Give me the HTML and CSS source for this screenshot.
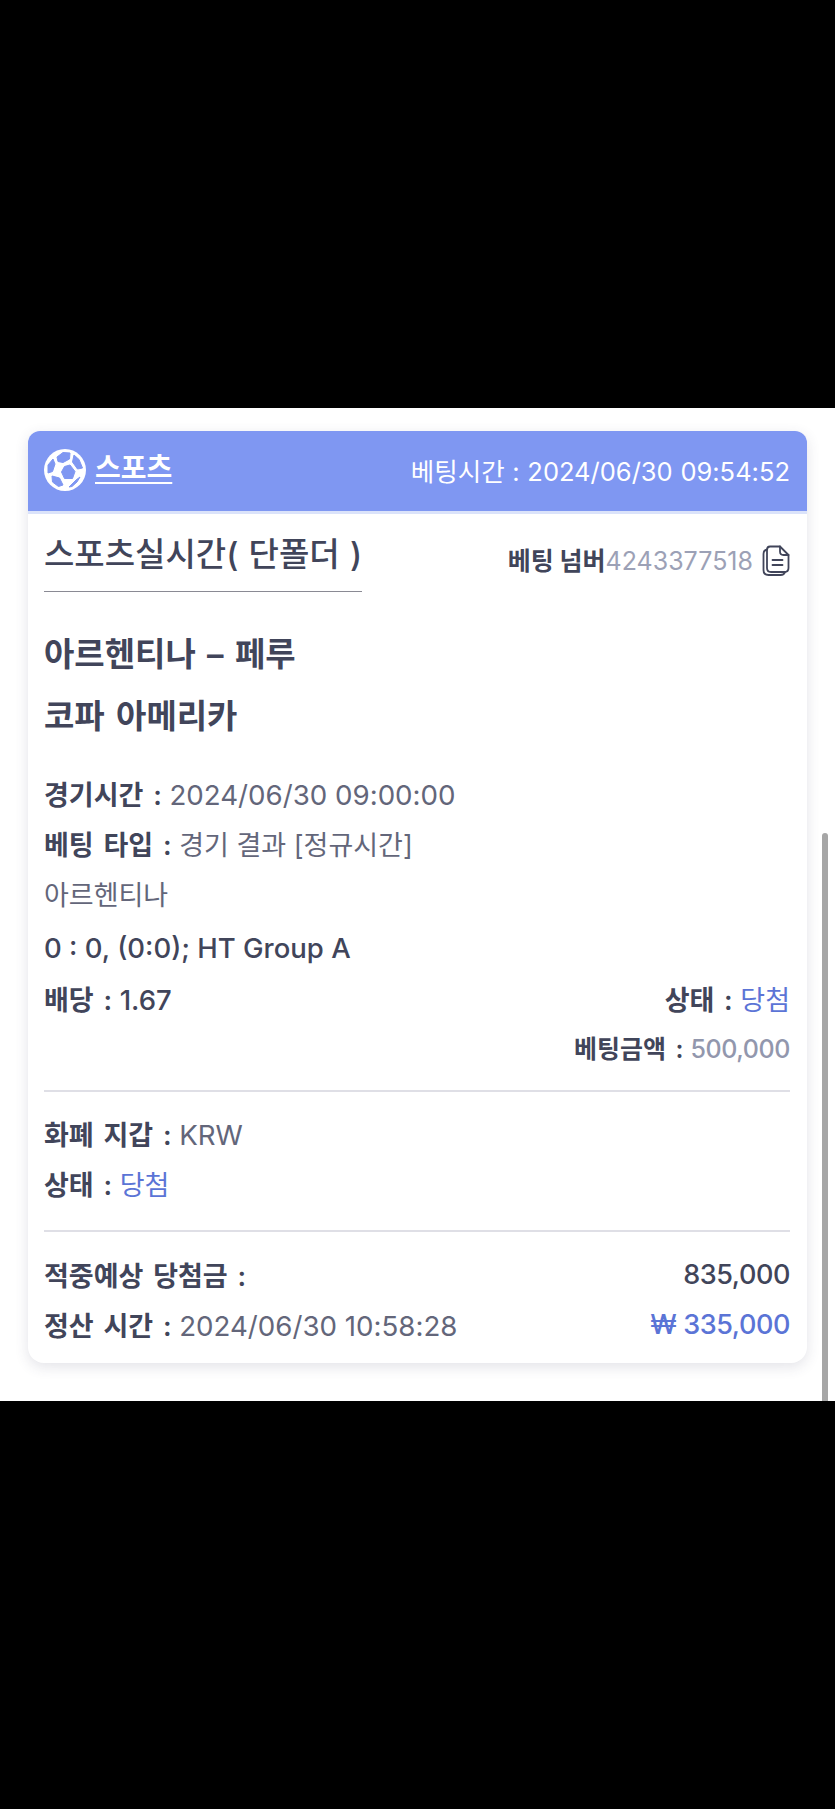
FILE: index.html
```html
<!DOCTYPE html>
<html lang="ko">
<head>
    <meta charset="UTF-8">
    <meta name="viewport" content="width=device-width, initial-scale=1.0">
    <title>베팅 내역</title>
    <link rel="stylesheet" href="styles.css">
</head>
<body>
    <div class="black-band"></div>
    <main class="screen">
        <div class="card">
            <div class="card-head">
                <div class="sport">
                    <svg class="ball" viewBox="0 0 42 42">
                        <circle cx="21" cy="21" r="21" fill="#fff"/>
                        <g fill="#7f97f2" stroke="#7f97f2" stroke-width="1" stroke-linejoin="round">
                            <path d="M13 8l6-4.500 7 .5-.5 6-6.500 3.500-5-1z"/>
                            <path d="M30 6l5 4.500 3.500 8.500-5 1-5-7z"/>
                            <path d="M26 16l5 6.500-2.500 7-8 0-3-6.500 3-5.500z"/>
                            <path d="M4 16l5-6 2 5-2.500 7.500-4.500 1.500z"/>
                            <path d="M8 27l7.500 2 3.500 7-4.500 1.500-6-4.500z"/>
                            <path d="M32 31l4-3-3 5-5 4.500-3 .5z"/>
                        </g>
                    </svg>
                    <span class="sport-name">스포츠</span>
                </div>
                <div class="bet-time">베팅시간 : 2024/06/30 09:54:52</div>
            </div>
            <div class="card-body">
                <div class="title-row">
                    <h2 class="bet-title">스포츠실시간( 단폴더 )</h2>
                    <div class="bet-number">
                        <strong>베팅 넘버</strong><span class="muted">4243377518</span>
                        <svg class="copy" viewBox="0 0 28 32" fill="none" stroke="#41455a" stroke-width="1.800" stroke-linejoin="round" stroke-linecap="round">
                            <path d="M5 4.500C2.500 5 1.500 6.500 1.500 9v16c0 3 2 5 5 5h12c2.500 0 4-1 4.500-3"/>
                            <path d="M8 1.500h10l8.500 8.500v13c0 2.500-1.500 4-4 4H9c-2.500 0-4-1.500-4-4V5c0-2.200 1-3.500 3-3.500z"/>
                            <path d="M18 1.500v5c0 2 1.500 3.500 3.500 3.500h5"/>
                            <path d="M10.500 15h10M10.500 20h10"/>
                        </svg>
                    </div>
                </div>
                <div class="match">
                    <p>아르헨티나 – 페루</p>
                    <p>코파 아메리카</p>
                </div>
                <div class="rows">
                    <div class="row"><div><b>경기시간 :</b> <span class="val num">2024/06/30 09:00:00</span></div></div>
                    <div class="row"><div><b>베팅 타입 :</b> <span class="val">경기 결과 [정규시간]</span></div></div>
                    <div class="row"><div class="val">아르헨티나</div></div>
                    <div class="row score"><div class="latin">0 : 0, (0:0); HT Group A</div></div>
                    <div class="row"><div><b>배당 :</b> <span class="latin">1.67</span></div><div><b>상태 :</b> <span class="blue">당첨</span></div></div>
                    <div class="row end small"><div><b>베팅금액 :</b> <span class="muted amount">500,000</span></div></div>
                </div>
                <div class="rows section">
                    <div class="row"><div><b>화폐 지갑 :</b> <span class="val num">KRW</span></div></div>
                    <div class="row"><div><b>상태 :</b> <span class="blue">당첨</span></div></div>
                </div>
                <div class="rows section last">
                    <div class="row"><div><b>적중예상 당첨금 :</b></div><div class="latin money">835,000</div></div>
                    <div class="row"><div><b>정산 시간 :</b> <span class="val num">2024/06/30 10:58:28</span></div><div class="latin money blue">₩ 335,000</div></div>
                </div>
            </div>
        </div>
        <div class="scrollbar"></div>
    </main>
    <div class="black-band"></div>
</body>
</html>
```

FILE: styles.css
```css
* {
    box-sizing: border-box;
}
body {
    margin: 0;
    background-color: #000;
    font-family: Inter, "Noto Sans CJK KR", sans-serif;
    color: #41455a;
}
.black-band {
    height: 408px;
    background-color: #000;
}
.screen {
    position: relative;
    height: 993px;
    padding: 23px 28px 0;
    background-color: #fff;
}
.scrollbar {
    position: absolute;
    top: 425px;
    right: 7px;
    bottom: 0;
    width: 6px;
    border-radius: 3px 3px 0 0;
    background-color: #a6a6a6;
}
.card {
    height: 932px;
    border-radius: 12px 12px 16px 16px;
    background-color: #fff;
    box-shadow: 0 4px 14px rgba(60, 60, 90, 0.14);
}
.card-head {
    display: flex;
    justify-content: space-between;
    align-items: center;
    height: 83px;
    padding: 0 17px 3px 16px;
    background-color: #7f97f2;
    border-bottom: 3px solid #dbe3fa;
    border-radius: 12px 12px 0 0;
    color: #fff;
}
.sport {
    display: flex;
    align-items: center;
    gap: 9px;
}
.ball {
    width: 42px;
    height: 42px;
}
.sport-name {
    margin-top: -4px;
    font-size: 28px;
    font-weight: 700;
    line-height: 32px;
    text-decoration: underline;
    text-underline-offset: 4px;
}
.bet-time {
    font-size: 25.5px;
    word-spacing: 0.5px;
}
.card-body {
    padding: 0 17px 0 16px;
}
.title-row {
    display: flex;
    justify-content: space-between;
    align-items: flex-start;
}
.bet-title {
    margin: 18px 0 0;
    padding-bottom: 14px;
    border-bottom: 1px solid #8a8a94;
    font-size: 33px;
    font-weight: 500;
    line-height: 45px;
    word-spacing: 1.5px;
}
.bet-number {
    display: flex;
    align-items: center;
    margin-top: 30px;
    font-size: 25px;
    line-height: 34px;
}
.copy {
    width: 28px;
    height: 32px;
    margin-left: 9px;
}
.muted {
    color: #9ca1b6;
}
.amount {
    color: #9297ad;
    font-weight: 500;
    letter-spacing: -0.4px;
}
.match {
    margin-top: 40px;
    font-size: 33px;
    font-weight: 600;
    word-spacing: 3px;
}
.match p {
    margin: 0 0 18px;
    line-height: 44px;
}
.rows {
    margin-top: 30px;
    font-size: 27px;
}
.row {
    display: flex;
    justify-content: space-between;
    align-items: center;
    height: 50px;
}
.row.end {
    justify-content: flex-end;
}
.row.score {
    margin-top: 5px;
}
.row.end {
    margin-top: -1px;
}
.small {
    font-size: 25px;
}
.small b {
    word-spacing: 1.5px;
}
.row b {
    font-weight: 600;
    word-spacing: 3px;
}
.latin {
    font-size: 27.5px;
    font-weight: 500;
}
.money {
    font-size: 27px;
    letter-spacing: -0.4px;
}
.val {
    color: #63667a;
}
.num {
    font-size: 27.7px;
}
.blue {
    color: #5b74d6;
}
.section {
    margin-top: 18px;
    padding-top: 16px;
    border-top: 2px solid #dfdfe6;
}
.section.last {
    margin-top: 22px;
    padding-top: 17px;
}
```
